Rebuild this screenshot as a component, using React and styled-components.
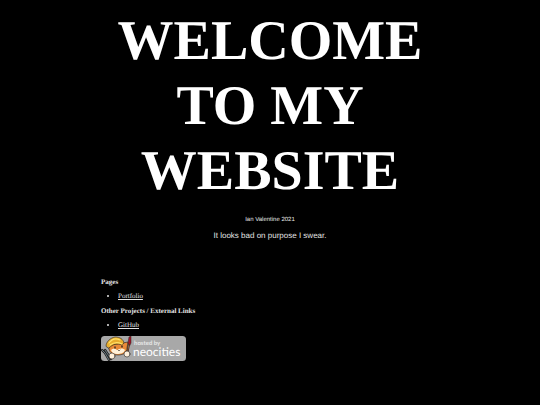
import React from "react";
import styled, { createGlobalStyle } from "styled-components";

const GlobalStyle = createGlobalStyle`
  body {
    margin: 0;
    background: #000;
    color: #fff;
    font-family: "Liberation Serif", serif;
    text-rendering: geometricPrecision;
  }
`;
const Page = styled.main`
  box-sizing: border-box;
  width: 100%;
  min-height: 100vh;
  padding: 9px 101px 8px;
`;
const Title = styled.h1`
  margin: 0;
  font-size: 56px;
  line-height: 65px;
  text-align: center;
`;
const Byline = styled.p`
  margin: 10px 0 0;
  color: #e4e4e4;
  font: 6px/12px "Liberation Sans", sans-serif;
  text-align: center;
`;
const Tagline = styled(Byline)`
  margin-top: 4px;
  font-size: 8px;
`;
const Links = styled.nav`
  margin-top: 36px;
  color: #e4e4e4;
  font-size: 7px;
  line-height: 8px;
`;
const Heading = styled.h2`
  margin: 0;
  font-size: 7px;
  line-height: 8px;
`;
const List = styled.ul`
  margin: 6px 0 7px;
  padding-left: 17px;
`;
const Anchor = styled.a`
  color: inherit;
`;
const BadgeLink = styled.a`
  display: block;
  width: fit-content;
  border-radius: 4px;
`;
const BadgeArt = styled.svg`
  display: block;
  width: 85px;
  height: 25px;
`;
const BadgeText = styled.text`
  fill: ${({ $strong }) => ($strong ? "#fff" : "#e8e8e8")};
  font-family: Lato, sans-serif;
  font-size: ${({ $strong }) => ($strong ? 12 : 6)}px;
  font-weight: ${({ $strong }) => ($strong ? 400 : 700)};
`;

function NeocitiesBadge() {
  return (
    <BadgeLink href="#neocities" aria-label="Hosted by Neocities">
      <BadgeArt viewBox="0 0 85 25" aria-hidden="true">
        <rect width="85" height="25" rx="3.5" fill="#a8a8a8" />
        <g stroke="#25211f" strokeLinejoin="round" strokeLinecap="round">
          <path d="M1 14 4 17 8 24M4 14 10 23" strokeWidth="2.4" />
          <path d="M1 14 4 17 8 24M4 14 10 23" fill="none" stroke="#657a84" strokeWidth="1" />
          <path d="M8 11c-1 5 4 8 9 8 6 0 9-3 9-7l1-6-5 1-13 2z" fill="#e98a38" strokeWidth=".6" />
          <path d="M10 14c2-2 4-2 6 0 3-2 6-2 8 0-1 3-4 4-8 4-3 0-5-1-6-4z" fill="#fff1d8" stroke="none" />
          <path d="M5 10c0-4 4-8 9-9 5 0 8 2 9 6l-2 2c-5-2-9-1-13 3z" fill="#e9ad2d" strokeWidth=".6" />
          <path d="M8 7c3-4 7-5 11-3M9 9c4-3 8-3 12-1" fill="none" stroke="#ffe16a" strokeWidth="1.2" />
          <path d="M14 11v1M21 10v1" fill="none" strokeWidth="1.3" />
          <path d="m17 14 1 1 1-1" fill="none" strokeWidth=".6" />
          <path d="m28 8-2 11" stroke="#302018" strokeWidth="2" />
          <path d="m28 8-2 11" stroke="#b57447" strokeWidth=".8" />
          <path d="m27 7 1-6 2-1v7l-1 2z" fill="#a51527" strokeWidth=".5" />
          <circle cx="11" cy="20" r="3" fill="#fff1dc" strokeWidth=".6" />
          <circle cx="26" cy="18" r="3" fill="#fff1dc" strokeWidth=".6" />
        </g>
        <BadgeText x="33" y="9">hosted by</BadgeText>
        <BadgeText x="32" y="20" $strong>neocities</BadgeText>
      </BadgeArt>
    </BadgeLink>
  );
}

export default function App() {
  return (
    <>
      <GlobalStyle />
      <Page>
        <Title>WELCOME TO MY WEBSITE</Title>
        <Byline>Ian Valentine 2021</Byline>
        <Tagline>It looks bad on purpose I swear.</Tagline>
        <Links>
          <Heading>Pages</Heading>
          <List><li><Anchor href="#portfolio">Portfolio</Anchor></li></List>
          <Heading>Other Projects / External Links</Heading>
          <List><li><Anchor href="#github">GitHub</Anchor></li></List>
          <NeocitiesBadge />
        </Links>
      </Page>
    </>
  );
}
